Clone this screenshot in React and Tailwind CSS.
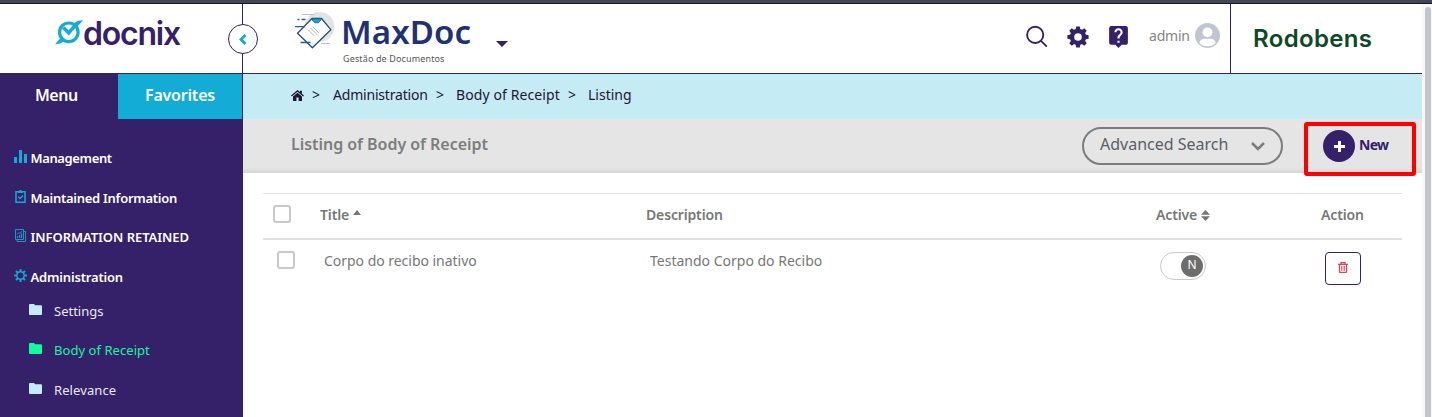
import React from "react";
import { MdLiveHelp } from "react-icons/md";

const teeth = [0, 45, 90, 135, 180, 225, 270, 315];

function SolidGear() {
  return (
    <svg className="h-[22px] w-[22px]" viewBox="0 0 22 22">
      <circle cx="11" cy="11" r="6" fill="none" stroke="#35206a" strokeWidth="4.4" />
      {teeth.map((a) => (
        <path key={a} d="M8.6 3.8 9.2 .4h3.6l.6 3.4z" fill="#35206a" transform={`rotate(${a} 11 11)`} />
      ))}
    </svg>
  );
}

function OutlineGear() {
  return (
    <svg className="h-[13px] w-[13px]" viewBox="0 0 13 13" stroke="#12acd6" fill="none">
      <circle cx="6.5" cy="6.5" r="3.7" strokeWidth="1.5" />
      {teeth.map((a) => (
        <path key={a} d="M6.5 2.8V.1" strokeWidth="1.9" transform={`rotate(${a} 6.5 6.5)`} />
      ))}
    </svg>
  );
}

function BarsIcon() {
  return (
    <svg className="h-[13px] w-[13px]" viewBox="0 0 13 13" fill="#12acd6">
      <path d="M0 7h3v6H0zM5 0h3v13H5zM10 4h3v9h-3z" />
    </svg>
  );
}

function ClipboardIcon() {
  return (
    <svg className="h-[13px] w-[13px]" viewBox="0 0 13 13" fill="none" stroke="#12acd6">
      <path d="M2 1.7h9v10.5H2z" strokeWidth="1.5" />
      <path d="M4.5 1.9h4M6.5 0v2" strokeWidth="2" />
      <path d="M4.3 6.8 6 8.4l3-3" strokeWidth="1.4" />
    </svg>
  );
}

function ReportIcon() {
  return (
    <svg className="h-[13px] w-[13px]" viewBox="0 0 13 13" fill="none" stroke="#1c97c3" strokeWidth="1">
      <path d="M1.5.5h8v10h-8zM9.8 2.5h1.7v10H3v-1.8" />
      <path d="M3.5 9V7.3M5.5 9V6M7.5 9V4.5" strokeWidth="1.3" />
      <path d="m3 5.5 2-2 1 1 2-2.3" />
    </svg>
  );
}

function FolderIcon({ className }) {
  return (
    <svg className={`h-[11px] w-[13px] ${className}`} viewBox="0 0 13 11" fill="currentColor">
      <path d="M1 0h4l1.200 1.200H12q1 0 1 1V10q0 1-1 1H1q-1 0-1-1V1q0-1 1-1z" />
    </svg>
  );
}

function HomeIcon() {
  return (
    <svg className="mt-[16px] h-[11px] w-[13px]" viewBox="0 0 13 11" fill="#1e1538">
      <path d="M6.500 0 9 2.100V.8h1.900v3L13 5.600l-.8.9L6.500 1.800.8 6.500 0 5.600z" />
      <path d="M6.500 2.700 11 6.400V11H7.600V7.600H5.400V11H2V6.400z" />
    </svg>
  );
}

function TrashIcon() {
  return (
    <svg className="-mt-[2px] h-[11px] w-[10px]" viewBox="0 0 10 11" fill="none" stroke="#e04658">
      <path d="M0 2.400h10M3 2V.6h4V2M1.500 2.500v7.300q0 .7.7.7h5.600q.7 0 .7-.7V2.500" strokeWidth="1.300" />
      <path d="M3.500 4v4.800M5 4v4.800M6.500 4v4.800" strokeWidth=".8" />
    </svg>
  );
}

function DocnixLogo() {
  return (
    <div className="flex pl-[54px] pt-[9px]">
      <svg className="mt-[5px] h-[32px] w-[30px] shrink-0" viewBox="54 18 30 32" fill="none" stroke="#12acd6">
        <circle cx="68.800" cy="32.300" r="9.300" strokeWidth="3.200" />
        <path d="M55 44.200 60 43.600 65 41 61 37.500zM83 20.300 78 20.800 73.500 23.500 77 27z" fill="#12acd6" stroke="none" />
        <path d="m63.300 27.500 5.400 5.400 7.800-9" strokeWidth="3.500" />
      </svg>
      <span className="-ml-px whitespace-nowrap font-['Inter',sans-serif] text-[32px] font-semibold leading-[42px] tracking-[-1.2px] text-[#35206a]">docnix</span>
    </div>
  );
}

function MaxDocMark() {
  return (
    <svg className="h-[40px] w-[42px] shrink-0" viewBox="294 11 42 40" fill="none">
      <circle cx="319.500" cy="27" r="15" fill="#e2e3e4" />
      <path d="M312 18.500h9.500l9.300 11.200L312.400 47.800 297.500 33.200z" fill="#fff" stroke="#234a78" strokeWidth="1.300" strokeLinejoin="round" />
      <path d="M312 18.800h9v1l-2.500 3h-3.500L312 20z" fill="#12a5d4" stroke="#1b5f8c" strokeWidth=".8" />
      <path d="M295 26.600h10M297.500 19.500h2M301.500 19.500h4M300.500 42.500h10" stroke="#315b83" strokeWidth="1.400" />
      <path d="M302 14.500h12M321 43.500h9" stroke="#bcc3c8" strokeWidth="1.200" />
      <path d="m308.500 30 6 6M310.500 28l7.500 7.500M313 27l6 6" stroke="#a4adb3" strokeWidth=".9" />
    </svg>
  );
}

function MenuItem({ icon, label, className }) {
  return (
    <div className="flex h-[39.67px] items-start pl-[14px]">
      <span className="h-[13px] w-[13px]">{icon}</span>
      <span className={`-mt-px ml-[3.5px] whitespace-nowrap text-[13px] font-semibold leading-[19px] ${className}`}>{label}</span>
    </div>
  );
}

function SubItem({ label, className = "text-[#e9e9f2]", fill = "text-[#c5ebf4]", spacing }) {
  return (
    <div className={`flex h-[39.5px] items-start pl-[29px] ${className}`}>
      <FolderIcon className={`mt-[3px] ${fill}`} />
      <span className={`ml-[12px] whitespace-nowrap text-[13px] leading-[20px] ${spacing}`}>{label}</span>
    </div>
  );
}

function Checkbox({ className }) {
  return <span className={`block h-[18px] w-[18px] rounded-[3px] border-2 border-[#c9c9c9] bg-white ${className}`} />;
}

export default function App() {
  return (
    <div className="flex h-[417px] w-[1432px] flex-col overflow-hidden bg-white font-['Noto_Sans','Open_Sans',sans-serif]">
      <div className="h-[4px] shrink-0 border-b border-[#15161f] bg-[#414554]" />
      <div className="flex min-h-0 flex-1">
        <aside className="relative z-20 flex w-[243px] shrink-0 flex-col bg-[#35206a]">
          <div className="h-[70px] shrink-0 border-b border-r border-[#35206a] bg-white">
            <DocnixLogo />
          </div>
          <button className="absolute left-[228px] top-[20px] z-10 flex h-[30px] w-[30px] items-center justify-center rounded-full border border-[#35206a] bg-white">
            <svg className="h-[11px] w-[8px]" viewBox="0 0 8 11" fill="none" stroke="#12acd6" strokeWidth="2.800"><path d="M6.500 1 2 5.500 6.500 10" /></svg>
          </button>
          <div className="flex h-[45px] shrink-0 text-[16px] font-semibold leading-[43px] text-white">
            <div className="w-[118px] pl-[35px] tracking-[-0.5px]">Menu</div>
            <div className="w-[124px] bg-[#12acd6] pl-[27px] tracking-[-0.2px]">Favorites</div>
          </div>
          <nav className="pt-[31px] text-white">
            <MenuItem icon={<BarsIcon />} label="Management" className="tracking-[-0.37px]" />
            <MenuItem icon={<ClipboardIcon />} label="Maintained Information" className="tracking-[-0.28px]" />
            <MenuItem icon={<ReportIcon />} label="INFORMATION RETAINED" className="tracking-[-0.05px]" />
            <MenuItem icon={<OutlineGear />} label="Administration" className="tracking-[-0.18px]" />
            <div className="-mt-[7.67px]">
              <SubItem label="Settings" spacing="tracking-[0px]" />
              <SubItem label="Body of Receipt" className="text-[#18f79b]" fill="text-[#0cff9c]" spacing="tracking-[0.05px]" />
              <SubItem label="Relevance" spacing="tracking-[0.1px]" />
            </div>
          </nav>
        </aside>

        <main className="flex w-[1179px] shrink-0 flex-col">
          <header className="flex h-[70px] shrink-0 border-b border-[#35206a]">
            <div className="flex pl-[51px] pt-[7px]">
              <MaxDocMark />
              <div className="ml-[6px] w-[131px] whitespace-nowrap">
                <div className="-ml-px mt-[1px] text-[33px] font-semibold leading-[40px] tracking-[0.1px] text-[#203273]">MaxDoc</div>
                <div className="ml-px text-[9px] leading-[13px] tracking-[0.13px] text-[#555]">Gestão de Documentos</div>
              </div>
              <svg className="ml-[23px] mt-[30px] h-[6px] w-[12px]" viewBox="0 0 12 6"><path d="M0 0h12L6 6z" fill="#35206a" /></svg>
            </div>
            <div className="ml-auto flex">
              <svg className="mr-[19px] mt-[21px] h-[23px] w-[22px]" viewBox="0 0 22 23" fill="none" stroke="#35206a" strokeWidth="1.900"><circle cx="9.200" cy="9.900" r="8.100" /><path d="m14.800 15.700 6 6" /></svg>
              <div className="mt-[22px]"><SolidGear /></div>
              <MdLiveHelp className="ml-[17px] mt-[20px] h-[25px] w-[25px] text-[#35206a]" />
              <div className="ml-[18px] w-[46px] pt-[21px] text-[14px] leading-[22px] tracking-[-0.2px] text-[#858585]">admin</div>
              <svg className="mt-[19px] h-[25px] w-[25px]" viewBox="0 0 25 25"><circle cx="12.500" cy="12.500" r="12.500" fill="#bfc6d0" /><circle cx="12.500" cy="9.300" r="4.900" fill="#fff" /><path d="M4.300 20c.6-3 3-4.300 5-4.300h6.400c2 0 4.400 1.300 5 4.300a12 12 0 0 1-16.400 0" fill="#fff" /></svg>
              <div className="ml-[10px] w-[192px] whitespace-nowrap border-l border-[#35206a] pl-[22px] pt-[17px] font-['Inter',sans-serif] text-[24px] font-semibold leading-[36px] tracking-[0.35px] text-[#0c4a27]">Rodobens</div>
            </div>
          </header>

          <div className="flex h-[45px] shrink-0 whitespace-nowrap bg-[#c5ebf4] pl-[48px] text-[14px] leading-[42px] text-[#1e1538]">
            <HomeIcon />
            <span className="ml-[8px] w-[21px]">&gt;</span>
            <span className="w-[103px] tracking-[-0.2px]">Administration</span>
            <span className="w-[20px]">&gt;</span>
            <span className="w-[112px] tracking-[0.1px]">Body of Receipt</span>
            <span className="w-[20px]">&gt;</span>
            <span>Listing</span>
          </div>

          <div className="relative flex h-[54px] shrink-0 bg-[#e5e5e5] bg-linear-to-t from-[#d4d4d4] to-[#e5e5e5] to-[5px] pl-[48px]">
            <h1 className="w-[791px] whitespace-nowrap text-[16px] font-semibold leading-[51px] tracking-[-0.04px] text-[#7d7d7d]">Listing of Body of Receipt</h1>
            <button className="mt-[8px] flex h-[38px] w-[201px] items-center rounded-full border-2 border-[#7c7c7c] pl-[16px]">
              <span className="-mt-[5px] w-[151px] whitespace-nowrap text-left text-[16px] text-[#575f66]">Advanced Search</span>
              <svg className="mt-px h-[9px] w-[14px]" viewBox="0 0 14 9" fill="none" stroke="#7c7c7c" strokeWidth="2.500"><path d="m1 1 6 6 6-6" /></svg>
            </button>
            <div className="relative ml-[21px] mt-[3px] flex h-[54px] w-[112px] shrink-0 rounded-[3px] border-4 border-[#ff0000] pl-[15px] pt-[4px]">
              <span className="flex h-[32px] w-[32px] items-center justify-center rounded-full bg-[#35206a]">
                <svg className="h-[11px] w-[11px]" viewBox="0 0 11 11" stroke="#fff" strokeWidth="3"><path d="M5.500 0v11M0 5.500h11" /></svg>
              </span>
              <span className="ml-[4px] text-[14px] font-bold leading-[30px] tracking-[-0.7px] text-[#35206a]">New</span>
            </div>
          </div>

          <section className="px-[20px] pt-[20px] text-[14px] text-[#777]">
            <div className="grid h-[47px] grid-cols-[57px_326px_510px_165px_81px] border-b-2 border-t border-[#dee2e6] font-semibold leading-[41px] tracking-[-0.15px]">
              <Checkbox className="ml-[10px] mt-[11px]" />
              <div className="flex">Title <svg className="ml-[4px] mt-[16px] h-[5px] w-[8px]" viewBox="0 0 8 5"><path d="M0 5h8L4 0z" fill="#777" /></svg></div>
              <div>Description</div>
              <div className="flex">Active <svg className="ml-[4px] mt-[16px] h-[11px] w-[9px]" viewBox="0 0 9 11"><path d="M0 4.800h9L4.500 0zM0 6.300h9L4.500 11z" fill="#777" /></svg></div>
              <div>Action</div>
            </div>
            <div className="grid h-[60px] grid-cols-[61px_326px_510px_165px_77px] leading-[42px]">
              <Checkbox className="ml-[14px] mt-[11px]" />
              <div className="tracking-[-0.03px]">Corpo do recibo inativo</div>
              <div>Testando Corpo do Recibo</div>
              <div className="mt-[12px] flex h-[28px] w-[46px] justify-end rounded-full border border-[#c9c9c9] pr-[2px] pt-[2px]">
                <span className="h-[22px] w-[22px] rounded-full bg-[#6d6d6d] text-center text-[12px] leading-[20px] text-white">N</span>
              </div>
              <button className="mt-[12px] flex h-[33px] w-[36px] items-center justify-center rounded-[4px] border border-[#35206a]"><TrashIcon /></button>
            </div>
          </section>
        </main>
        <div className="flex-1 bg-[#f8f8f9] pl-[3px] pt-[3px]">
          <div className="h-[430px] w-[6px] rounded-full bg-[#c2c5ca]" />
        </div>
      </div>
    </div>
  );
}
